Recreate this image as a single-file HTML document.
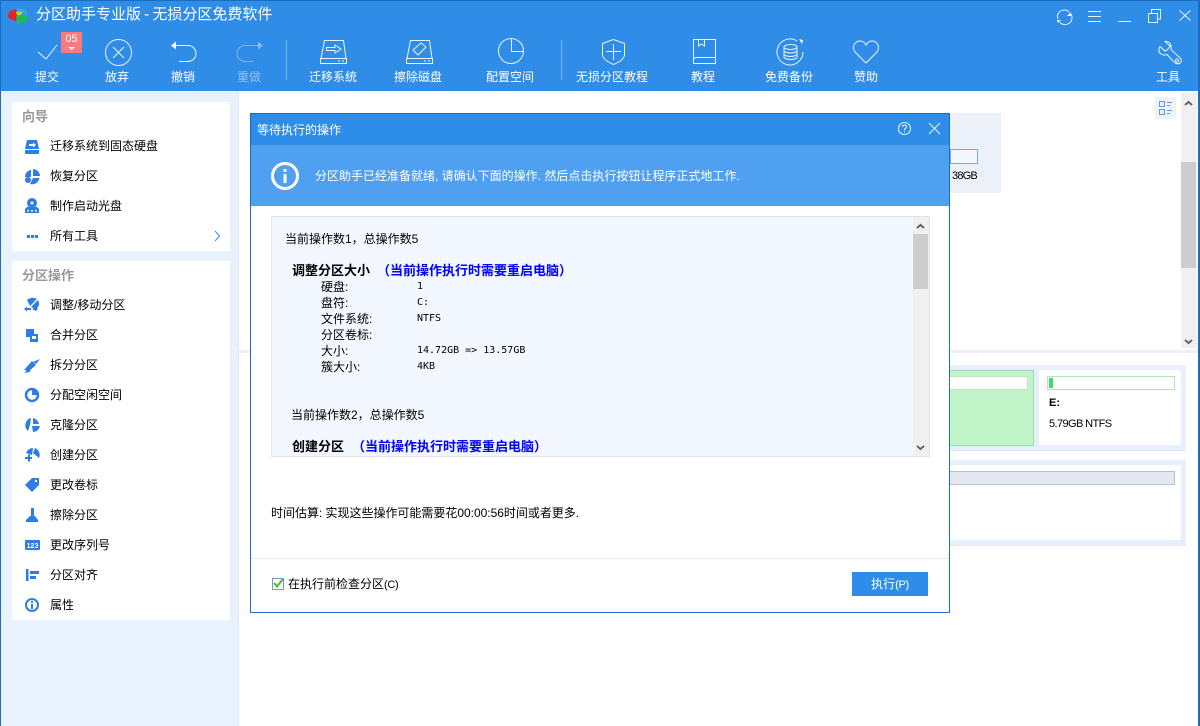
<!DOCTYPE html>
<html><head><meta charset="utf-8"><style>
html,body{margin:0;padding:0;width:1200px;height:726px;overflow:hidden;background:#fff}
body{position:relative;font-family:"Liberation Sans","WenQuanYi Zen Hei","Noto Sans CJK SC",sans-serif;font-size:12px;color:#000}
.a{position:absolute}
.t{position:absolute;white-space:nowrap;line-height:16px;height:16px}
.w{color:#fff}
.c{transform:translateX(-50%)}
.m{font-family:"DejaVu Sans Mono","Liberation Mono",monospace;font-size:10px}
.b{font-weight:bold;font-size:13px}
.bl{color:#00f}
svg{position:absolute;left:0;top:0}
</style></head><body>

<div class="a" style="left:0;top:0;width:1200px;height:91px;background:#2f8de8"></div>
<div class="a" style="left:1px;top:91px;width:238px;height:635px;background:#e9f1fd"></div>
<div class="a" style="left:238px;top:91px;width:1px;height:635px;background:#dfe6f2"></div>
<div class="a" style="left:12px;top:102px;width:218px;height:149px;background:#fff"></div>
<div class="a" style="left:12px;top:261px;width:218px;height:359px;background:#fff"></div>

<div class="a" style="left:239px;top:350px;width:959px;height:3px;background:#ecf0f8"></div>

<!-- back content -->
<div class="a" style="left:950px;top:113px;width:51px;height:80px;background:#ecf1f9"></div>
<div class="a" style="left:950px;top:149px;width:26px;height:13px;border:1px solid #7ba9dc;background:#f4f7fc"></div>
<div class="t" style="left:952px;top:168px;font-size:11px;letter-spacing:-.8px">38GB</div>

<div class="a" style="left:950px;top:365px;width:236px;height:85px;background:#e6effc;border-bottom:1px solid #dfe6f2"></div>
<div class="a" style="left:950px;top:370px;width:83px;height:74px;background:#c1f5c9;border:1px solid #9ddcab;border-left:0"></div>
<div class="a" style="left:950px;top:376px;width:77px;height:12px;background:#fff;border:1px solid #b8e8c4;border-left:0"></div>
<div class="a" style="left:1039px;top:370px;width:142px;height:75px;background:#fff"></div>
<div class="a" style="left:1047px;top:376px;width:126px;height:12px;background:#fff;border:1px solid #aee5be"></div>
<div class="a" style="left:1049px;top:378px;width:4px;height:10px;background:#3ddc67"></div>
<div class="t" style="left:1049px;top:395px;font-weight:bold;font-size:11px">E:</div>
<div class="t" style="left:1049px;top:416px;font-size:11px;letter-spacing:-.6px">5.79GB NTFS</div>

<div class="a" style="left:950px;top:460px;width:236px;height:85px;background:#e6effc;border-bottom:1px solid #dfe6f2"></div>
<div class="a" style="left:950px;top:465px;width:231px;height:75px;background:#fff"></div>
<div class="a" style="left:950px;top:471px;width:224px;height:12px;background:#e4e8f0;border:1px solid #bcbfca;border-left:0"></div>

<!-- main scrollbar -->
<div class="a" style="left:1181px;top:93px;width:16px;height:255px;background:#f0f0f0"></div>
<div class="a" style="left:1181px;top:162px;width:15px;height:106px;background:#cdcdcd"></div>
<div class="a" style="left:1155px;top:97px;width:21px;height:22px;background:#edf1f8"></div>

<!-- Dialog -->
<div class="a" style="left:250px;top:113px;width:698px;height:498px;background:#fff;border:1px solid #1a6fbd"></div>
<div class="a" style="left:251px;top:114px;width:698px;height:31px;background:#2e8de8"></div>
<div class="a" style="left:251px;top:145px;width:698px;height:61px;background:#50a0f2"></div>
<div class="a" style="left:271px;top:216px;width:657px;height:239px;background:#f3f7ff;border:1px solid #dfe3ee"></div>
<div class="a" style="left:913px;top:217px;width:16px;height:239px;background:#f0f0f0"></div>
<div class="a" style="left:913px;top:234px;width:15px;height:55px;background:#cdcdcd"></div>
<div class="a" style="left:251px;top:558px;width:698px;height:1px;background:#e6ebf3"></div>
<div class="a" style="left:852px;top:572px;width:76px;height:24px;background:#2e8de8"></div>
<div class="a" style="left:272px;top:578px;width:10px;height:10px;background:#fff;border:1px solid #6b9bd6"></div>

<svg width="1200" height="726" viewBox="0 0 1200 726">
<!-- window frame -->
<path d="M0 .5H1200" stroke="#1a6fbd"/>
<path d="M.5 0V726" stroke="#1a6fbd"/>
<path d="M1199 0V726" stroke="#1a6fbd" stroke-width="2"/>
<!-- logo -->
<path d="M8 14 Q10 10 16 9 L17 15 L16 21 Q10 20 8 17 Z" fill="#e4252a"/>
<path d="M16 9 Q24 7 27 12 L27 15 L20 12 Z" fill="#35a7e8"/>
<path d="M16 16 L28 15 V19 Q25 24 17 24 Z" fill="#1fb85a"/>
<path d="M16 12 Q19 10.5 22 12 Q24 14 19 15.5 Q16 15 16 12 Z" fill="#a5d93a"/>
<g fill="none" stroke="#fff" stroke-width="1" opacity=".9">
<!-- check / cancel -->
<path d="M38 52 L46 59 L57 45"/>
<circle cx="118.5" cy="52.5" r="13"/>
<path d="M113 47 L124 58 M124 47 L113 58"/>
<!-- undo -->
<path d="M175 45.5 H188 A7.5 7.5 0 0 1 188 61.5 H179"/>
<!-- migrate -->
<path d="M324.5 40.5 H343.5 L346 58.5 H321 Z"/>
<rect x="320.5" y="58.5" width="26" height="5"/>
<path d="M326.5 47.5 H335 V45 L341 49 L335 53 V50.5 H326.5 Z"/>
<path d="M338 61 h2 M342 61 h2"/>
<!-- erase -->
<path d="M410.5 40.5 H429.5 L432 58.5 H407 Z"/>
<rect x="406.5" y="58.5" width="26" height="5"/>
<path d="M413 50 L421 43 L426 47 L418 55 Z"/>
<path d="M424 61 h2 M428 61 h2"/>
<!-- pie -->
<circle cx="511" cy="51" r="12.5"/>
<path d="M511.5 39 V51.5 H523"/>
<!-- shield -->
<path d="M613.5 39.5 L602.5 43.5 V55 Q603 60 613.5 64.5 Q624 60 624.5 55 V43.5 Z"/>
<path d="M613.5 44 V60 M606 51.5 H621"/>
<!-- book -->
<path d="M693.5 39.5 H715.5 V63.5 H693.5 Z"/>
<path d="M693.5 59.5 Q694 57.5 697 57.5 H715.5"/>
<path d="M698.5 39.5 V46 L701.5 44 L704.5 46 V39.5"/>
<!-- backup -->
<path d="M797 41 A13 13 0 1 0 803 52"/>
<ellipse cx="790.5" cy="47" rx="6.5" ry="2.5"/>
<path d="M784 47 V57 A6.5 2.5 0 0 0 797 57 V47 M784 50.5 A6.5 2.5 0 0 0 797 50.5 M784 54 A6.5 2.5 0 0 0 797 54"/>
<!-- heart -->
<path d="M866 63 L855.5 52.5 C851 47 855 41 860 41 C863 41 865 43 866 45 C867 43 869 41 872 41 C877 41 881 47 876.5 52.5 Z"/>
<!-- wrench -->
<path d="M1165 41.5 L1170 46 Q1168 50 1165 51 L1160 46.5 Q1157 51 1161 54 Q1164 56 1167 54.5 L1175 63 Q1179 65 1181 62 Q1182 59 1179 57 L1171 49.5 Q1172 45 1169 42.5 Q1167 41 1165 41.5 Z"/>
<circle cx="1177" cy="60.5" r="1.5"/>
<!-- window controls -->
<path d="M1058 19 A7 7 0 0 1 1057.5 15 A7 7 0 0 1 1069 12"/>
<path d="M1071 14 A7 7 0 0 1 1060 22.5"/>
<path d="M1088 11.5 H1101 M1088 16.5 H1101 M1088 21.5 H1101"/>
<path d="M1118 21.5 H1131"/>
<rect x="1148.5" y="13.5" width="9" height="9"/>
<path d="M1151.5 13 V9.5 H1160.5 V19 H1158"/>
<path d="M1179.5 10.5 L1190.5 20.5 M1190.5 10.5 L1179.5 20.5"/>
<!-- dialog controls -->
<circle cx="904.5" cy="128.5" r="6"/>
<path d="M902.5 127 Q902.5 125 904.5 125 Q906.5 125 906.5 127 Q906.5 128 904.5 129 V130.5 M904.5 131.5 V132.5"/>
<path d="M929 123 L940 134 M940 123 L929 134"/>
</g>
<path d="M171 45.5 L176 41.5 V49.5 Z" fill="#fff"/>
<path d="M1057 20 h4 l-3 3z M1071 12 v4 h-4z" fill="#fff"/>
<path d="M799 39 l4 1 l-1 4 z" fill="#fff"/>
<g opacity=".35" fill="none" stroke="#fff">
<path d="M259 45.5 H245 A7.5 7.5 0 0 0 245 61.5 H253"/>
<path d="M286.5 40 V80 M561.5 40 V80"/>
</g>
<path d="M263 45.5 L258 41.5 V49.5 Z" fill="#fff" opacity=".4"/>

<!-- badge -->
<rect x="61" y="32" width="21" height="21" fill="#fb7a7f"/>
<path d="M68 47 H75 L71.5 50 Z" fill="#fff"/>

<!-- view toggle -->
<g fill="none" stroke="#5b9bec">
<rect x="1159.5" y="101.5" width="5" height="5"/><rect x="1159.5" y="109.5" width="5" height="5"/>
<path d="M1167 102.5h5M1167 105.5h3M1167 110.5h5M1167 113.5h3"/>
</g>
<!-- scroll arrows -->
<g fill="none" stroke="#666" stroke-width="2">
<path d="M1185 105 L1188.5 102 L1192 105"/>
<path d="M1185 340 L1188.5 343 L1192 340"/>
<path d="M917 228 L920.5 225 L924 228"/>
<path d="M917 446 L920.5 449 L924 446"/>
</g>

<!-- info icon -->
<circle cx="285" cy="176" r="12.5" fill="none" stroke="#fff" stroke-width="3"/>
<rect x="283.5" y="174" width="3" height="9" fill="#fff"/><rect x="283.5" y="169" width="3" height="3" fill="#fff"/>

<!-- checkbox tick -->
<path d="M274 583 L277 586.5 L283 579" fill="none" stroke="#4fbf1a" stroke-width="2"/>

<!-- sidebar icons -->
<g fill="#2d7de6">
<path d="M27 140 H37 L39 149 H25 Z"/><rect x="25" y="150" width="14" height="4"/>
<path d="M29 144 H33 V142.5 L36 145 L33 147.5 V146 H29 Z" fill="#fff"/>
<path d="M31 170 A7 7 0 0 0 25 177 H31 Z"/><path d="M33 169 A7.5 7.5 0 0 1 40 176 H33 Z"/><path d="M33 178 H39.5 A7.5 7.5 0 0 1 30 184 Z"/><circle cx="28" cy="180" r="3"/>
<circle cx="32" cy="203" r="5"/><path d="M27 207 H37 L39 209 V213 H25 V209 Z"/>
<circle cx="32" cy="203" r="1.5" fill="#fff"/><path d="M27 210h2v1.500h-2zM31 210h2v1.500h-2zM35 210h2v1.500h-2z" fill="#fff"/>
<rect x="27" y="235" width="3" height="3"/><rect x="31" y="235" width="3" height="3"/><rect x="35" y="235" width="3" height="3"/>
<path d="M27 300 Q32 296 37 299 L30 306 Z"/><path d="M38 300 Q41 305 36 309 L31 307 Z"/><path d="M24 309 L27 306.500 V308 H31 V310 H27 V311.500 Z M38 309 L35 306.500 V308 H33 V310 H35 V311.500 Z"/>
<rect x="26" y="329" width="8" height="8"/><rect x="30" y="334" width="8" height="8"/><rect x="32" y="336" width="4" height="3" fill="#fff"/>
<path d="M24 370 L32 361 L36 365 L29 371 Z M33 362 L40 359 L36 364 Z"/>
<path d="M24 373 L30 368 V372 Z"/>
<circle cx="32" cy="395" r="6" fill="none" stroke="#2d7de6" stroke-width="2.5"/><path d="M32 395 V389 A6 6 0 0 1 38 395 Z"/>
<path d="M31 418 A7.500 7.500 0 0 0 28 431 L30 425 Z"/><path d="M33 418 A7.500 7.500 0 0 1 39 424 H33 Z"/><path d="M32 426 H40 A7.500 7.500 0 0 1 33 432 Z"/>
<path d="M33 448 A7.500 7.500 0 0 0 26 453 L32 455 Z"/><path d="M35 448 A7.500 7.500 0 0 1 39 458 L33 453 Z"/><path d="M25 457 H28 V454.500 H30 V457 H32 V459 H30 V461.500 H28 V459 H25 Z"/>
<path d="M25 485 L32 478 H39 V485 L32 492 Z"/><circle cx="36" cy="481" r="1.200" fill="#fff"/>
<rect x="31" y="508" width="3" height="8"/><path d="M26 520 L30 516 H35 L38 520 V522 H26 Z"/>
<rect x="25" y="540" width="15" height="10" rx="1"/>
<rect x="26" y="569" width="2.500" height="12"/><rect x="30" y="571" width="9" height="3"/><rect x="30" y="576" width="6" height="3"/>
<circle cx="32" cy="605" r="6" fill="none" stroke="#2d7de6" stroke-width="2"/><rect x="31" y="604" width="2" height="5"/><rect x="31" y="601" width="2" height="2"/>
</g>
<path d="M215 231 L219.500 236 L215 241" fill="none" stroke="#3a8ee8"/>
<text x="32.500" y="548" font-family="Liberation Sans" font-size="7" font-weight="bold" fill="#fff" text-anchor="middle">123</text>
</svg>

<!-- Title + toolbar -->
<div class="t w" style="left:36px;top:7px;font-size:15px;word-spacing:-1px">分区助手专业版 - 无损分区免费软件</div>
<div class="t w c" style="left:71.500px;top:31px;font-size:11px">05</div>
<div class="t w c" style="left:47px;top:69px">提交</div>
<div class="t w c" style="left:117px;top:69px">放弃</div>
<div class="t w c" style="left:183px;top:69px">撤销</div>
<div class="t c" style="left:249px;top:69px;color:#8fc0f2">重做</div>
<div class="t w c" style="left:333px;top:69px">迁移系统</div>
<div class="t w c" style="left:418px;top:69px">擦除磁盘</div>
<div class="t w c" style="left:510px;top:69px">配置空间</div>
<div class="t w c" style="left:612px;top:69px">无损分区教程</div>
<div class="t w c" style="left:703px;top:69px">教程</div>
<div class="t w c" style="left:789px;top:69px">免费备份</div>
<div class="t w c" style="left:866px;top:69px">赞助</div>
<div class="t w c" style="left:1168px;top:69px">工具</div>

<!-- Sidebar -->
<div class="t b" style="left:22px;top:109px;color:#999">向导</div>
<div class="t" style="left:50px;top:138px">迁移系统到固态硬盘</div>
<div class="t" style="left:50px;top:168px">恢复分区</div>
<div class="t" style="left:50px;top:198px">制作启动光盘</div>
<div class="t" style="left:50px;top:228px">所有工具</div>
<div class="t b" style="left:22px;top:268px;color:#999">分区操作</div>
<div class="t" style="left:50px;top:297px">调整/移动分区</div>
<div class="t" style="left:50px;top:327px">合并分区</div>
<div class="t" style="left:50px;top:357px">拆分分区</div>
<div class="t" style="left:50px;top:387px">分配空闲空间</div>
<div class="t" style="left:50px;top:417px">克隆分区</div>
<div class="t" style="left:50px;top:447px">创建分区</div>
<div class="t" style="left:50px;top:477px">更改卷标</div>
<div class="t" style="left:50px;top:507px">擦除分区</div>
<div class="t" style="left:50px;top:537px">更改序列号</div>
<div class="t" style="left:50px;top:567px">分区对齐</div>
<div class="t" style="left:50px;top:597px">属性</div>

<!-- Dialog text -->
<div class="t w" style="left:257px;top:122px">等待执行的操作</div>
<div class="t w" style="left:315px;top:168px">分区助手已经准备就绪, 请确认下面的操作. 然后点击执行按钮让程序正式地工作.</div>
<div class="t" style="left:285px;top:231px">当前操作数1，总操作数5</div>
<div class="t b" style="left:292px;top:263px">调整分区大小</div>
<div class="t b bl" style="left:377px;top:263px">（当前操作执行时需要重启电脑）</div>
<div class="t" style="left:321px;top:279px">硬盘:</div><div class="t m" style="left:417px;top:279px">1</div>
<div class="t" style="left:321px;top:295px">盘符:</div><div class="t m" style="left:417px;top:295px">C:</div>
<div class="t" style="left:321px;top:311px">文件系统:</div><div class="t m" style="left:417px;top:311px">NTFS</div>
<div class="t" style="left:321px;top:327px">分区卷标:</div>
<div class="t" style="left:321px;top:343px">大小:</div><div class="t m" style="left:417px;top:343px">14.72GB =&gt; 13.57GB</div>
<div class="t" style="left:321px;top:359px">簇大小:</div><div class="t m" style="left:417px;top:359px">4KB</div>
<div class="t" style="left:291px;top:407px">当前操作数2，总操作数5</div>
<div class="t b" style="left:292px;top:439px">创建分区</div>
<div class="t b bl" style="left:352px;top:439px">（当前操作执行时需要重启电脑）</div>
<div class="t" style="left:271px;top:505px;letter-spacing:-.02px">时间估算: 实现这些操作可能需要花00:00:56时间或者更多.</div>
<div class="t" style="left:288px;top:576px">在执行前检查分区<span style="font-size:11px;letter-spacing:-.3px">(C)</span></div>
<div class="t w c" style="left:890px;top:576px">执行<span style="font-size:11px;letter-spacing:-.3px">(P)</span></div>
</body></html>
